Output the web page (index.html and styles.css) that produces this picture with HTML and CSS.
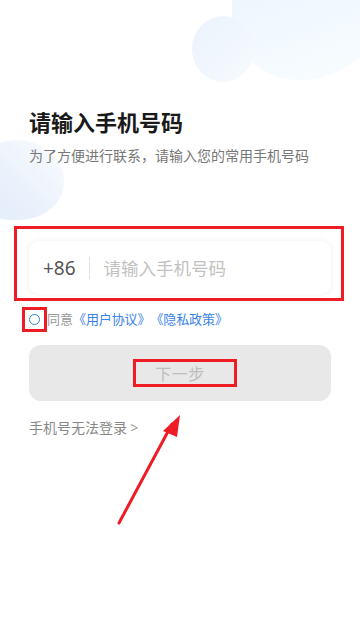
FILE: index.html
```html
<!DOCTYPE html>
<html lang="zh-CN">
<head>
    <meta charset="UTF-8">
    <meta name="viewport" content="width=device-width, initial-scale=1.0">
    <title>手机号登录</title>
    <link rel="stylesheet" href="styles.css">
</head>
<body>
    <div class="page">
        <div class="blob blob-top-big"></div>
        <div class="blob blob-top"></div>
        <div class="blob blob-left"></div>

        <div class="content">
            <h1 class="title">请输入手机号码</h1>
            <p class="subtitle">为了方便进行联系，请输入您的常用手机号码</p>

            <div class="phone-field">
                <span class="code">+86</span>
                <span class="divider"></span>
                <span class="placeholder">请输入手机号码</span>
                <span class="mark mark-field"></span>
            </div>

            <div class="agree">
                <span class="radio"><span class="mark mark-radio"></span></span>
                <span class="agree-text">同意</span>
                <a class="link">《用户协议》</a>
                <a class="link">《隐私政策》</a>
            </div>

            <button class="next-btn">
                <span class="next-label">下一步<span class="mark mark-btn"></span></span>
            </button>

            <div class="help">手机号无法登录 <span class="chev">&gt;</span></div>
        </div>

        <svg class="arrow" width="90" height="160" viewBox="0 0 90 160">
            <line x1="9" y1="143" x2="62" y2="44" stroke="#ee1c25" stroke-width="3" stroke-linecap="round"/>
            <polygon points="70,35 53,51 67,57" fill="#ee1c25"/>
        </svg>
    </div>
</body>
</html>
```

FILE: styles.css
```css
* {
    box-sizing: border-box;
}
body {
    margin: 0;
    background: #fff;
    font-family: "Noto Sans CJK SC", "Noto Sans", sans-serif;
}
.page {
    position: relative;
    width: 360px;
    height: 619px;
    overflow: hidden;
}
.blob {
    position: absolute;
    border-radius: 50%;
}
.blob-top {
    left: 192px;
    top: 16px;
    width: 62px;
    height: 66px;
    background: linear-gradient(135deg, #ecf3fc 0%, #f1f7fd 60%, #f8fbfe 100%);
}
.blob-top-big {
    left: 232px;
    top: -50px;
    width: 150px;
    height: 130px;
    border-radius: 0 0 60% 50%;
    background: linear-gradient(160deg, #ebf4fd 0%, #f2f9fe 55%, #fafdff 100%);
}
.blob-left {
    left: -28px;
    top: 140px;
    width: 92px;
    height: 80px;
    border-radius: 50% 55% 50% 45%;
    background: linear-gradient(45deg, #dfeafb 0%, #ecf2fc 50%, #fafcff 100%);
}
.content {
    position: relative;
    padding: 106px 29px 0;
}
.title {
    margin: 0;
    font-size: 22px;
    line-height: 30px;
    font-weight: 700;
    color: #1a1a1a;
}
.subtitle {
    margin: 9px 0 0;
    font-size: 14px;
    line-height: 20px;
    color: #777;
}
.phone-field {
    position: relative;
    display: flex;
    align-items: center;
    height: 53px;
    margin-top: 76px;
    padding: 0 14px;
    background: #fff;
    border-radius: 10px;
    box-shadow: 0 0 6px rgba(0, 0, 0, 0.07);
}
.code {
    font-family: "Noto Sans", sans-serif;
    font-size: 19px;
    color: #555;
}
.divider {
    width: 1px;
    height: 22px;
    margin: 0 14px 0 13px;
    background: #e2e2e2;
}
.placeholder {
    font-size: 17.5px;
    color: #c2c2c2;
}
.mark {
    position: absolute;
    border: 3px solid #ee1c25;
}
.mark-field {
    top: -15px;
    left: -15px;
    right: -13px;
    bottom: -7px;
}
.agree {
    display: flex;
    align-items: center;
    margin-top: 16px;
    font-size: 13px;
    line-height: 18px;
}
.radio {
    position: relative;
    width: 11px;
    height: 11px;
    margin-right: 7px;
    border: 1.5px solid #2f86c4;
    border-radius: 50%;
}
.mark-radio {
    top: -8px;
    left: -8px;
    right: -8px;
    bottom: -8px;
}
.agree-text {
    color: #999;
}
.link {
    color: #3a82e6;
    letter-spacing: -0.1px;
}
.next-btn {
    display: flex;
    align-items: center;
    justify-content: center;
    width: 100%;
    height: 56px;
    margin-top: 17px;
    border: none;
    border-radius: 12px;
    background: #e8e8e8;
    font-family: inherit;
}
.next-label {
    position: relative;
    font-size: 16px;
    color: #bdbdbd;
    letter-spacing: 0.5px;
}
.mark-btn {
    top: -2px;
    left: -22px;
    right: -32px;
    bottom: -2px;
}
.help {
    margin-top: 16px;
    font-size: 14px;
    line-height: 20px;
    color: #888;
}
.chev {
    font-family: "Noto Sans", sans-serif;
    color: #999;
}
.arrow {
    position: absolute;
    left: 110px;
    top: 380px;
}
```
